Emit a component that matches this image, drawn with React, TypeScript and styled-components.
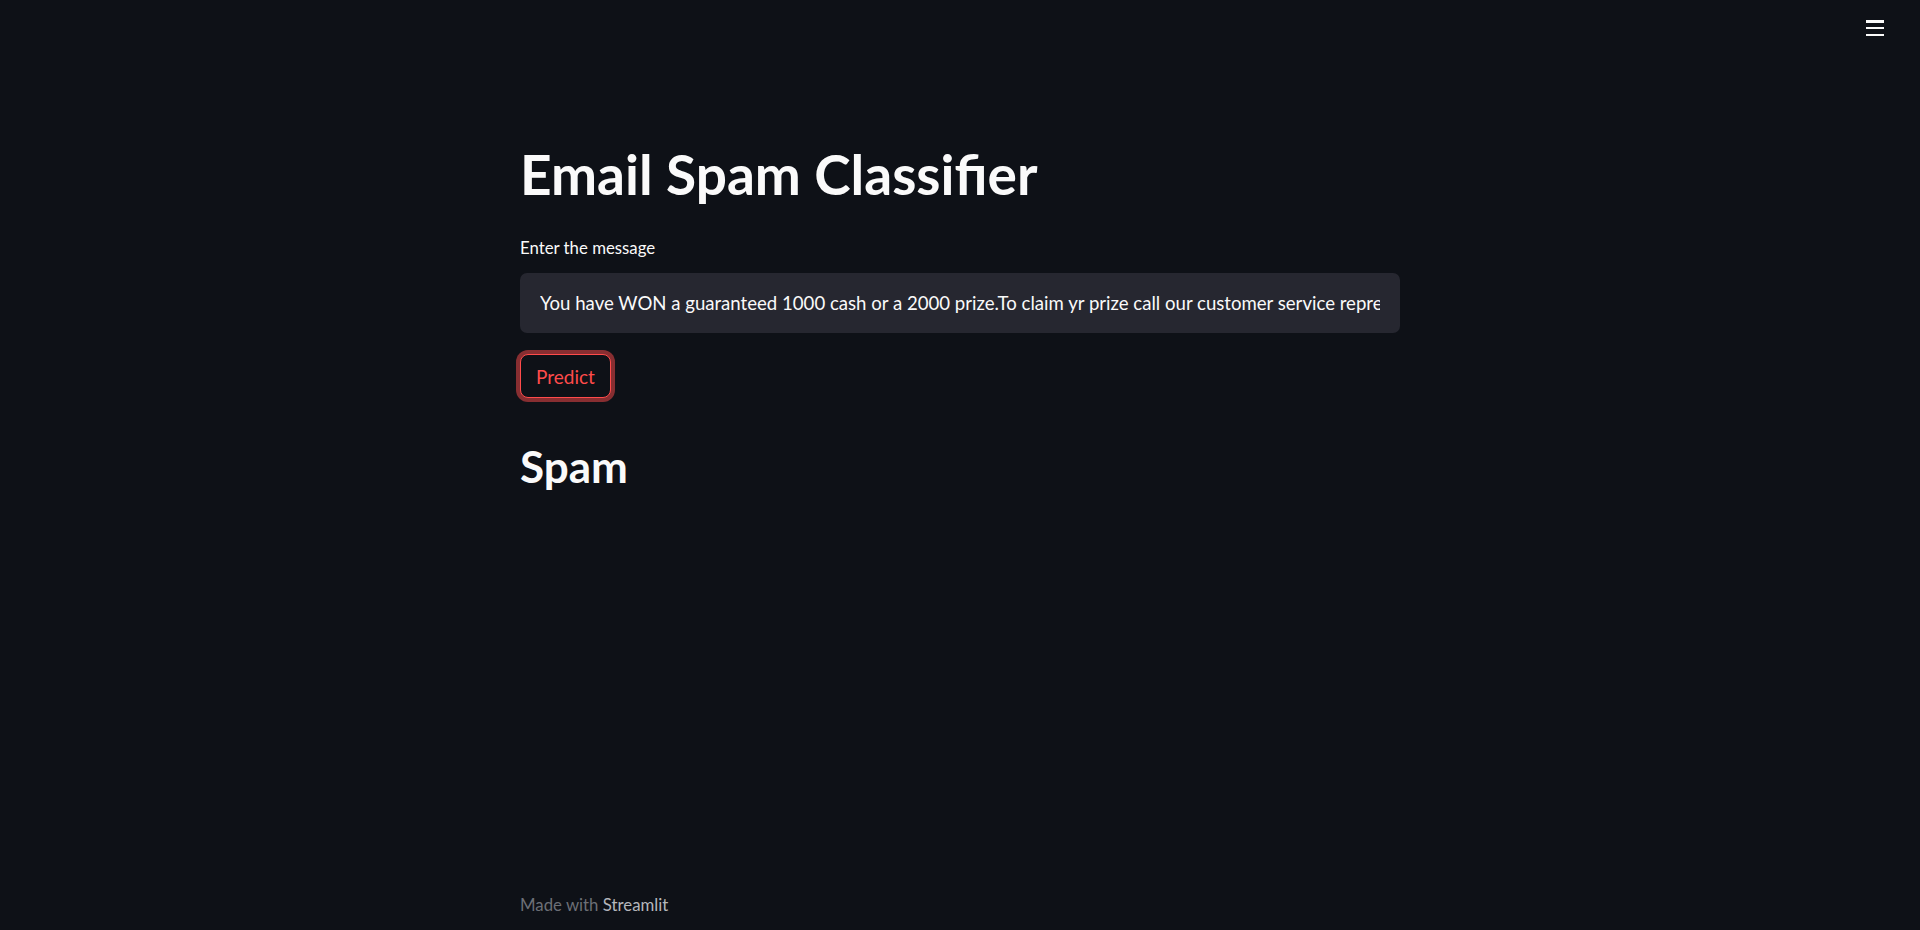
import React from "react";
import styled, { createGlobalStyle } from "styled-components";

const FONT = `"Lato", "Noto Sans", sans-serif`;

const Global = createGlobalStyle`
  html, body {
    margin: 0;
    padding: 0;
    background: #0e1117;
  }
  body {
    font-family: ${FONT};
    color: #fafafa;
  }
`;

const Page = styled.div`
  height: 930px;
  display: flex;
  flex-direction: column;
  background: #0e1117;
  overflow: hidden;
`;

const Header = styled.header`
  height: 56px;
  flex: none;
  display: flex;
  justify-content: flex-end;
  align-items: flex-start;
  padding: 20px 36px 0 0;
  box-sizing: border-box;
`;

const MenuButton = styled.button`
  width: 18px;
  height: 16px;
  padding: 0;
  border: none;
  background: transparent;
  display: flex;
  flex-direction: column;
  justify-content: space-between;
  cursor: pointer;
`;

const MenuBar = styled.span`
  display: block;
  height: 2.5px;
  width: 18px;
  background: #fafafa;
`;

const Main = styled.main`
  width: 880px;
  margin: 0 auto;
  flex: 1;
  display: flex;
  flex-direction: column;
  padding-top: 85px;
`;

const Title = styled.h1`
  margin: 0;
  font-family: ${FONT};
  font-weight: 700;
  font-size: 55px;
  line-height: 66px;
  color: #fafafa;
`;

const Label = styled.label`
  margin-top: 29px;
  font-size: 16.8px;
  line-height: 24px;
  color: #fafafa;
`;

const InputBox = styled.div`
  margin-top: 13px;
  height: 60px;
  background: #262730;
  border-radius: 7px;
  display: flex;
  align-items: center;
  padding: 0 20px;
  box-sizing: border-box;
  overflow: hidden;
`;

const InputText = styled.span`
  font-size: 18.6px;
  white-space: nowrap;
  overflow: hidden;
  color: #fafafa;
  width: 100%;
`;

const ButtonRow = styled.div`
  margin-top: 21px;
  display: flex;
`;

const PredictButton = styled.button`
  height: 44px;
  padding: 0 15px;
  border: 1.5px solid #ff4b4b;
  border-radius: 8px;
  background: #0e1117;
  color: #ff4b4b;
  font-family: ${FONT};
  font-size: 19px;
  box-shadow: 0 0 0 4px rgba(255, 75, 75, 0.5);
  cursor: pointer;
`;

const Result = styled.h2`
  margin: 41px 0 0;
  font-family: ${FONT};
  font-weight: 700;
  font-size: 44px;
  line-height: 54px;
  color: #fafafa;
`;

const Footer = styled.footer`
  width: 880px;
  margin: 0 auto;
  height: 37px;
  flex: none;
  font-size: 16.8px;
  line-height: 24px;
  color: #6c6f76;
`;

const FooterLink = styled.a`
  color: #b5b7bc;
  text-decoration: none;
`;

const message =
  "You have WON a guaranteed 1000 cash or a 2000 prize.To claim yr prize call our customer service representative on 08714712412 between 10am-7pm Cost 10p";

export default function App() {
  return (
    <Page>
      <Global />
      <Header>
        <MenuButton aria-label="menu">
          <MenuBar />
          <MenuBar />
          <MenuBar />
        </MenuButton>
      </Header>
      <Main>
        <Title>Email Spam Classifier</Title>
        <Label>Enter the message</Label>
        <InputBox>
          <InputText>{message}</InputText>
        </InputBox>
        <ButtonRow>
          <PredictButton>Predict</PredictButton>
        </ButtonRow>
        <Result>Spam</Result>
      </Main>
      <Footer>
        Made with <FooterLink href="#">Streamlit</FooterLink>
      </Footer>
    </Page>
  );
}
